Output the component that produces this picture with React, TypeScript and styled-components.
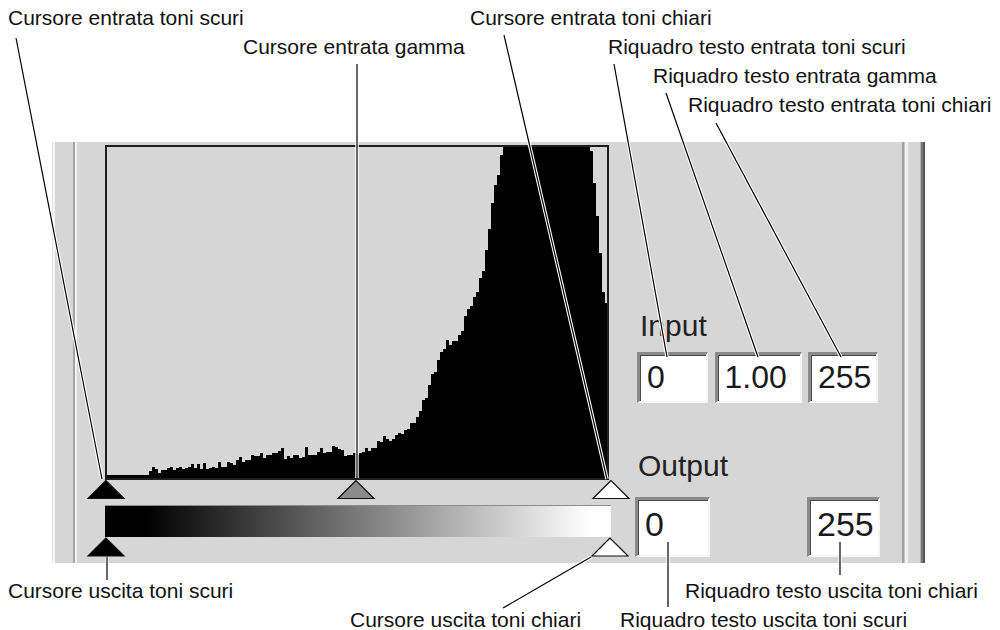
import React from 'react'
import styled, { createGlobalStyle } from 'styled-components'

const GlobalStyle = createGlobalStyle`
  html, body {
    margin: 0;
    padding: 0;
    background: #fff;
  }
  body {
    font-family: 'Liberation Sans', Arial, sans-serif;
    color: #111;
  }
`

const Figure = styled.div`
  position: relative;
  width: 1000px;
  height: 630px;
  overflow: hidden;
  box-sizing: border-box;
  padding: 142px 0 0 52px;
`

const Panel = styled.div`
  display: flex;
  width: 873px;
  height: 421px;
  background: #d6d6d6;
`

const LeftRail = styled.div`
  width: 25px;
  flex-shrink: 0;
  background: linear-gradient(
    to right,
    #e4e4e4 0 1px,
    #f6f6f6 1px 3px,
    #d6d6d6 3px 21px,
    #a4a4a4 21px 23px,
    #f2f2f2 23px 25px
  );
`

const RightRail = styled.div`
  width: 23px;
  flex-shrink: 0;
  background: linear-gradient(
    to right,
    #a2a2a2 0 2px,
    #c6c6c6 2px 3px,
    #f2f2f2 3px 6px,
    #d6d6d6 6px 18px,
    #b0b0b0 18px 19px,
    #7a7a7a 19px 21px,
    #555 21px 23px
  );
`

const Content = styled.div`
  flex: 1;
  display: flex;
  align-items: flex-start;
`

const HistColumn = styled.div`
  display: flex;
  flex-direction: column;
  width: 506px;
  flex-shrink: 0;
  margin-left: 28px;
  padding-top: 3px;
`

const HistFrame = styled.div`
  width: 504px;
  height: 335px;
  box-sizing: border-box;
  border: 2px solid #1e1e1e;
  background: #d6d6d6;

  svg {
    display: block;
  }
`

const SliderTrack = styled.svg`
  display: block;
  margin-left: -20px;
  overflow: visible;
`

const GradientBar = styled.div`
  width: 506px;
  height: 32px;
  margin-top: 5px;
  box-sizing: border-box;
  border-top: 1px solid #8c8c8c;
  background: linear-gradient(to right, #000 8%, #fff 96%);
`

const Controls = styled.div`
  display: flex;
  flex-direction: column;
  margin-left: 26px;
  padding-top: 169px;
`

const FieldLabel = styled.div<{ $indent: number; $gap: number }>`
  margin-left: ${({ $indent }) => $indent}px;
  margin-top: ${({ $gap }) => $gap}px;
  font-size: 30px;
  line-height: 30px;
  color: #222;
`

const FieldRow = styled.div<{ $gap: number; $indent?: number; $width?: number }>`
  display: flex;
  justify-content: space-between;
  margin-top: ${({ $gap }) => $gap}px;
  margin-left: ${({ $indent }) => $indent ?? 0}px;
  width: ${({ $width }) => ($width ? `${$width}px` : 'auto')};
`

const ValueBox = styled.div<{ $w: number; $h: number; $size: number; $pad: number }>`
  width: ${({ $w }) => $w}px;
  height: ${({ $h }) => $h}px;
  box-sizing: border-box;
  padding: ${({ $pad }) => $pad}px 0 0 7px;
  background: #fff;
  border-top: 3px solid #8a8a8a;
  border-left: 3px solid #8a8a8a;
  border-right: 2px solid #f6f6f6;
  border-bottom: 2px solid #f6f6f6;
  box-shadow: inset 1px 1px 0 #4a4a4a;
  font-size: ${({ $size }) => $size}px;
  line-height: ${({ $size }) => $size}px;
  color: #1a1a1a;
`

const Callout = styled.div<{ $x: number; $y: number }>`
  position: absolute;
  left: ${({ $x }) => $x}px;
  top: ${({ $y }) => $y}px;
  font-size: 21px;
  line-height: 21px;
  white-space: nowrap;
  color: #111;
`

const Leaders = styled.svg`
  position: absolute;
  left: 0;
  top: 0;
  pointer-events: none;
`

// histogram outline, page coordinates (x, top of the bar)
const CTRL: [number, number][] = [
  [107, 475], [148, 475], [150, 471], [180, 469], [223, 464], [257, 456],
  [300, 455], [333, 449], [356, 455], [367, 450], [380, 443], [395, 437],
  [410, 428], [420, 410], [430, 385], [437, 364], [447, 345], [460, 335],
  [467, 312], [478, 288], [485, 262], [490, 218], [493, 197], [497, 177],
  [500, 170], [502, 140], [590, 140], [592, 162], [596, 203], [600, 253],
  [603, 292], [606, 303], [608, 333],
]

const interp = (x: number) => {
  for (let i = 0; i < CTRL.length - 1; i++) {
    const [x0, y0] = CTRL[i]
    const [x1, y1] = CTRL[i + 1]
    if (x >= x0 && x <= x1) return y0 + ((y1 - y0) * (x - x0)) / (x1 - x0)
  }
  return CTRL[CTRL.length - 1][1]
}

const buildHistogram = () => {
  let seed = 11
  const rand = () => {
    seed = (seed * 16807) % 2147483647
    return seed / 2147483647
  }
  const parts: string[] = ['M0 331']
  for (let x = 107; x < 607; x += 3) {
    let top = interp(x + 1)
    if (x >= 150 && x < 500) {
      top += (rand() - 0.5) * 7
      if (rand() > 0.92) top -= 5
    }
    top = Math.max(147, Math.min(476, Math.round(top)))
    const y = top - 147
    parts.push(`L${x - 107} ${y}`, `L${Math.min(x + 3, 607) - 107} ${y}`)
  }
  parts.push('L500 331 Z')
  return parts.join(' ')
}

const HIST_PATH = buildHistogram()

// slider thumbs, x is the tip in page coordinates (svg starts at x=85)
const Thumb = ({ x, fill, top }: { x: number; fill: string; top: number }) => {
  const cx = x - 85
  return (
    <polygon
      points={`${cx},${top} ${cx - 18},${top + 18} ${cx + 18},${top + 18}`}
      fill={fill}
      stroke="#111"
      strokeWidth={1.2}
      strokeLinejoin="miter"
    />
  )
}

const LINES: [number, number, number, number][] = [
  [16, 38, 102, 479],
  [357, 64, 357, 478],
  [504, 35, 607, 479],
  [614, 64, 667, 357],
  [666, 93, 758, 357],
  [716, 123, 841, 357],
  [107, 557, 107, 580],
  [591, 557, 503, 608],
  [668, 542, 668, 607],
  [840, 542, 840, 575],
]

const LABELS: { x: number; y: number; text: string }[] = [
  { x: 8, y: 7, text: 'Cursore entrata toni scuri' },
  { x: 243, y: 36, text: 'Cursore entrata gamma' },
  { x: 470, y: 7, text: 'Cursore entrata toni chiari' },
  { x: 608, y: 36, text: 'Riquadro testo entrata toni scuri' },
  { x: 653, y: 65, text: 'Riquadro testo entrata gamma' },
  { x: 688, y: 94, text: 'Riquadro testo entrata toni chiari' },
  { x: 8, y: 580, text: 'Cursore uscita toni scuri' },
  { x: 685, y: 580, text: 'Riquadro testo uscita toni chiari' },
  { x: 350, y: 609, text: 'Cursore uscita toni chiari' },
  { x: 620, y: 609, text: 'Riquadro testo uscita toni scuri' },
]

const App: React.FC = () => {
  return (
    <>
      <GlobalStyle />
      <Figure>
        <Panel>
          <LeftRail />
          <Content>
            <HistColumn>
              <HistFrame>
                <svg width={500} height={331} viewBox="0 0 500 331" shapeRendering="crispEdges">
                  <path d={HIST_PATH} fill="#000" />
                </svg>
              </HistFrame>
              <SliderTrack width={545} height={20}>
                <Thumb x={106} top={0.5} fill="#000" />
                <Thumb x={356} top={0.5} fill="#8a8a8a" />
                <Thumb x={611} top={0.5} fill="#fff" />
              </SliderTrack>
              <GradientBar />
              <SliderTrack width={545} height={20}>
                <Thumb x={106} top={1} fill="#000" />
                <Thumb x={610} top={1} fill="#fff" />
              </SliderTrack>
            </HistColumn>
            <Controls>
              <FieldLabel $indent={3} $gap={0}>Input</FieldLabel>
              <FieldRow $gap={11} $width={241}>
                <ValueBox $w={71} $h={51} $size={32} $pad={6}>0</ValueBox>
                <ValueBox $w={87} $h={51} $size={32} $pad={6}>1.00</ValueBox>
                <ValueBox $w={70} $h={51} $size={32} $pad={6}>255</ValueBox>
              </FieldRow>
              <FieldLabel $indent={1} $gap={48}>Output</FieldLabel>
              <FieldRow $gap={16} $indent={-2} $width={245}>
                <ValueBox $w={75} $h={60} $size={34} $pad={7}>0</ValueBox>
                <ValueBox $w={73} $h={60} $size={34} $pad={7}>255</ValueBox>
              </FieldRow>
            </Controls>
          </Content>
          <RightRail />
        </Panel>

        {LABELS.map((l) => (
          <Callout key={l.text} $x={l.x} $y={l.y}>
            {l.text}
          </Callout>
        ))}

        <Leaders width={1000} height={630} viewBox="0 0 1000 630">
          {LINES.map(([x1, y1, x2, y2], i) => (
            <g key={i}>
              <line x1={x1} y1={y1} x2={x2} y2={y2} stroke="#fff" strokeWidth={3.4} />
              <line x1={x1} y1={y1} x2={x2} y2={y2} stroke="#000" strokeWidth={1.2} />
            </g>
          ))}
        </Leaders>
      </Figure>
    </>
  )
}

export default App
